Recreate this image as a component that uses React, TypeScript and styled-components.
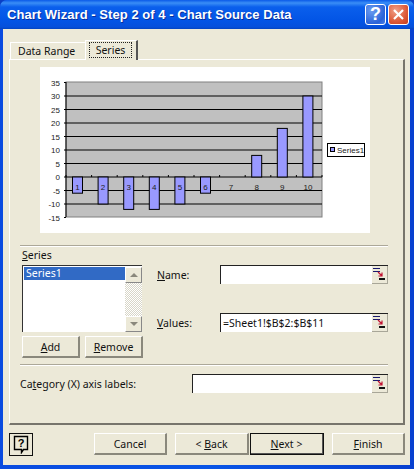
import { FC, ReactNode } from 'react';
import styled, { createGlobalStyle } from 'styled-components';

const values = [-6, -10, -12, -12, -10, -6, 0, 8, 18, 30];
const ticks = [35, 30, 25, 20, 15, 10, 5, 0, -5, -10, -15];
const zeroY = 177;
const unit = 2.7;

const Chart: FC = () => (
  <ChartSvg viewBox='40 67 330 166'>
    <rect x='66' y='82' width='256' height='135' fill='#c0c0c0' stroke='#808080' />
    {ticks.map((tick) => {
      const y = zeroY - tick * unit;
      return (
        <g key={tick}>
          {tick < 35 && tick > -15 && <line x1='64' x2='322' y1={y} y2={y} stroke='#000' />}
          {(tick === 35 || tick === -15) && <line x1='64' x2='66' y1={y} y2={y} stroke='#000' />}
          <ChartText x='60' y={y + 3} textAnchor='end'>
            {tick}
          </ChartText>
        </g>
      );
    })}
    <line x1='66' x2='66' y1='82' y2='217' stroke='#000' />
    {Array.from({ length: 11 }, (_, i) => (
      <line key={i} x1={66 + i * 25.6} x2={66 + i * 25.6} y1={zeroY - 2} y2={zeroY} stroke='#000' />
    ))}
    {values.map((value, i) => {
      const center = 77.5 + i * 25.6;
      return (
        <g key={i}>
          {value !== 0 && (
            <rect
              x={center - 5}
              y={value > 0 ? zeroY - value * unit : zeroY}
              width='10'
              height={Math.abs(value) * unit}
              fill='#9999ff'
              stroke='#000'
            />
          )}
          <ChartText x={center} y='190' textAnchor='middle'>
            {i + 1}
          </ChartText>
        </g>
      );
    })}
    <rect x='327.5' y='143.5' width='37' height='13' fill='#fff' stroke='#000' />
    <rect x='330.5' y='147.5' width='4' height='4' fill='#9999ff' stroke='#000' />
    <ChartText x='337' y='153'>
      Series1
    </ChartText>
  </ChartSvg>
);

const RefIcon: FC = () => (
  <RefButton>
    <svg width='15' height='15' viewBox='0 0 15 15'>
      <rect x='1' y='1' width='7' height='1' fill='#1a1a6e' />
      <rect x='1' y='4' width='7' height='1' fill='#1a1a6e' />
      <path d='M6 5l4 4M10 5.5v3.5H6.5' stroke='#c01030' strokeWidth='1.2' fill='none' />
      <rect x='7' y='11' width='6' height='2' fill='#101010' />
    </svg>
  </RefButton>
);

const Field: FC<{ value?: string; width: number }> = ({ value, width }) => (
  <FieldBox $width={width}>
    <FieldText>{value}</FieldText>
    <RefIcon />
  </FieldBox>
);

const Label: FC<{ before?: string; mark: string; after: string }> = ({ before, mark, after }) => (
  <span>
    {before}
    <u>{mark}</u>
    {after}
  </span>
);

const Button: FC<{ children: ReactNode; width: number; primary?: boolean }> = ({ children, width, primary }) => (
  <Btn $width={width} $primary={primary}>
    {children}
  </Btn>
);

export default function App() {
  return (
    <>
      <GlobalStyle />
      <Window>
        <TitleBar>
          <TitleText>Chart Wizard - Step 2 of 4 - Chart Source Data</TitleText>
          <HelpCaption>?</HelpCaption>
          <CloseCaption>
            <svg width='13' height='13' viewBox='0 0 13 13'>
              <path d='M2 2l9 9M11 2l-9 9' stroke='#fff' strokeWidth='2.2' />
            </svg>
          </CloseCaption>
        </TitleBar>
        <Client>
          <TabStrip>
            <Tab>Data Range</Tab>
            <ActiveTab>
              <Focus>Series</Focus>
            </ActiveTab>
          </TabStrip>
          <Panel>
            <ChartFrame>
              <Chart />
            </ChartFrame>
            <Divider $gap={12} />
            <SeriesSection>
              <SeriesTitle>
                <Label mark='S' after='eries' />
              </SeriesTitle>
              <SeriesBody>
                <SeriesLeft>
                  <ListBox>
                    <ListItems>
                      <SelectedItem>Series1</SelectedItem>
                    </ListItems>
                    <ScrollBar>
                      <ScrollButton>
                        <Arrow $up />
                      </ScrollButton>
                      <ScrollTrack />
                      <ScrollButton>
                        <Arrow />
                      </ScrollButton>
                    </ScrollBar>
                  </ListBox>
                  <ListActions>
                    <SmallButton>
                      <Label mark='A' after='dd' />
                    </SmallButton>
                    <SmallButton>
                      <Label mark='R' after='emove' />
                    </SmallButton>
                  </ListActions>
                </SeriesLeft>
                <SeriesRight>
                  <FieldRow>
                    <FieldLabel>
                      <Label mark='N' after='ame:' />
                    </FieldLabel>
                    <Field width={168} />
                  </FieldRow>
                  <FieldRow>
                    <FieldLabel>
                      <Label mark='V' after='alues:' />
                    </FieldLabel>
                    <Field width={168} value='=Sheet1!$B$2:$B$11' />
                  </FieldRow>
                </SeriesRight>
              </SeriesBody>
            </SeriesSection>
            <Divider $gap={6} />
            <CategoryRow>
              <span>
                <Label before='Ca' mark='t' after='egory (X) axis labels:' />
              </span>
              <Field width={196} />
            </CategoryRow>
          </Panel>
          <Footer>
            <HelpButton>
              <svg width='17' height='19' viewBox='0 0 17 19'>
                <path
                  d='M1.5 1.5h13v13h-4l-2 3v-3h-7z'
                  fill='#ece9d8'
                  stroke='#000'
                  strokeWidth='1.4'
                />
                <text x='8' y='12' textAnchor='middle' fontSize='11' fontWeight='700' fontFamily='Liberation Sans, sans-serif'>
                  ?
                </text>
              </svg>
            </HelpButton>
            <FooterButtons>
              <Button width={73}>Cancel</Button>
              <BackNext>
                <Button width={74}>
                  <Label before='< ' mark='B' after='ack' />
                </Button>
                <Button width={74} primary>
                  <Label mark='N' after='ext >' />
                </Button>
              </BackNext>
              <Button width={73}>
                <Label mark='F' after='inish' />
              </Button>
            </FooterButtons>
          </Footer>
        </Client>
      </Window>
    </>
  );
}

const GlobalStyle = createGlobalStyle`
  * {
    box-sizing: border-box;
  }
  html, body {
    margin: 0;
    background: #0a3fc4;
  }
  u {
    text-underline-offset: 1px;
  }
`;

const Window = styled.div`
  width: 414px;
  height: 469px;
  display: flex;
  flex-direction: column;
  overflow: hidden;
  border-radius: 7px 7px 0 0;
  background: linear-gradient(90deg, #0a4be0 0, #0a55e6 50%, #0840d0 100%);
  font-family: 'Noto Sans', 'Liberation Sans', sans-serif;
  font-size: 10.5px;
  color: #111;
`;

const TitleBar = styled.div`
  height: 29px;
  flex: none;
  display: flex;
  align-items: center;
  padding: 0 5px 1px 7px;
  background: linear-gradient(180deg, #0a5ae8 0, #3a8ef6 3px, #0a5fec 7px, #0355e6 20px, #0650dc 27px, #0444c0 29px);
`;

const TitleText = styled.div`
  flex: 1;
  color: #fff;
  font-family: 'Liberation Sans', sans-serif;
  font-size: 13px;
  font-weight: 700;
  letter-spacing: 0.05px;
  white-space: nowrap;
  text-shadow: 1px 1px 0 #0a2f9c;
`;

const CaptionButton = styled.div`
  width: 21px;
  height: 21px;
  display: flex;
  align-items: center;
  justify-content: center;
  border: 1px solid #fff;
  border-radius: 3px;
`;

const HelpCaption = styled(CaptionButton)`
  margin-right: 2px;
  background: radial-gradient(circle at 30% 30%, #6b9cf0, #2a62d8 70%, #4a80e8);
  color: #fff;
  font-family: 'Liberation Sans', sans-serif;
  font-size: 18px;
  font-weight: 700;
`;

const CloseCaption = styled(CaptionButton)`
  background: radial-gradient(circle at 35% 30%, #f0a088, #dd5a38 60%, #c43c1c);
`;

const Client = styled.div`
  flex: 1;
  display: flex;
  flex-direction: column;
  margin: 0 4px 4px 3px;
  padding: 11px 5px 0 6px;
  background: #ece9d8;
`;

const TabStrip = styled.div`
  height: 19px;
  flex: none;
  display: flex;
  align-items: flex-end;
  padding-left: 1px;
  position: relative;
  z-index: 1;
`;

const Tab = styled.div`
  width: 75px;
  height: 17px;
  padding-left: 7px;
  line-height: 17px;
  background: #ece9d8;
  border-top: 1px solid #fff;
  border-left: 1px solid #fff;
  white-space: nowrap;
`;

const ActiveTab = styled.div`
  width: 53px;
  height: 20px;
  margin-bottom: -1px;
  padding: 1px 4px 2px 3px;
  background: #ece9d8;
  border-top: 1px solid #fff;
  border-left: 1px solid #fff;
  border-right: 2px solid #555;
`;

const Focus = styled.div`
  height: 16px;
  line-height: 14px;
  text-align: center;
  border: 1px dotted #222;
`;

const Panel = styled.div`
  height: 366px;
  flex: none;
  display: flex;
  flex-direction: column;
  padding: 7px 15px 0 10px;
  border-top: 1px solid #fff;
  border-left: 1px solid #fff;
  border-right: 2px solid #77756c;
  border-bottom: 2px solid #77756c;
`;

const ChartFrame = styled.div`
  width: 330px;
  height: 166px;
  flex: none;
  margin-left: 20px;
  background: #fff;
`;

const ChartSvg = styled.svg`
  display: block;
  width: 330px;
  height: 166px;
`;

const ChartText = styled.text`
  font-family: 'Liberation Sans', sans-serif;
  font-size: 8px;
  fill: #222;
`;

const Divider = styled.div<{ $gap: number }>`
  height: 2px;
  flex: none;
  margin-top: ${({ $gap }) => $gap}px;
  background: #aca899;
  border-bottom: 1px solid #fff;
`;

const SeriesSection = styled.div`
  flex: none;
  display: flex;
  flex-direction: column;
  padding-left: 2px;
`;

const SeriesTitle = styled.div`
  height: 18px;
  flex: none;
  padding-top: 1px;
  line-height: 15px;
`;

const SeriesBody = styled.div`
  display: flex;
`;

const SeriesLeft = styled.div`
  width: 122px;
  flex: none;
  display: flex;
  flex-direction: column;
  gap: 4px;
`;

const ListBox = styled.div`
  width: 120px;
  height: 67px;
  display: flex;
  padding: 1px 0 0 1px;
  background: #fff;
  border-top: 1px solid #333;
  border-left: 1px solid #333;
`;

const ListItems = styled.div`
  flex: 1;
  background: #fff;
`;

const SelectedItem = styled.div`
  height: 13px;
  padding-left: 2px;
  line-height: 13px;
  color: #fff;
  background: #316ac5;
`;

const ScrollBar = styled.div`
  width: 17px;
  display: flex;
  flex-direction: column;
`;

const ScrollButton = styled.div`
  height: 16px;
  flex: none;
  display: flex;
  align-items: center;
  justify-content: center;
  background: #ece9d8;
  border-top: 1px solid #fff;
  border-left: 1px solid #fff;
  border-right: 1px solid #888;
  border-bottom: 1px solid #888;
`;

const ScrollTrack = styled.div`
  flex: 1;
  background: repeating-conic-gradient(#d8d6c8 0 25%, #fff 0 50%) 0 0 / 2px 2px;
`;

const Arrow = styled.div<{ $up?: boolean }>`
  width: 0;
  height: 0;
  border-left: 4px solid transparent;
  border-right: 4px solid transparent;
  ${({ $up }) => ($up ? 'border-bottom: 4px solid #8a887c;' : 'border-top: 4px solid #8a887c;')}
`;

const ListActions = styled.div`
  display: flex;
  gap: 5px;
`;

const Btn = styled.div<{ $width: number; $primary?: boolean }>`
  width: ${({ $width }) => $width}px;
  height: 22px;
  display: flex;
  align-items: center;
  justify-content: center;
  white-space: nowrap;
  background: #ece9d8;
  border-top: 1px solid #fff;
  border-left: 1px solid #fff;
  border-right: 2px solid #8a887c;
  border-bottom: 2px solid #8a887c;
  ${({ $primary }) =>
    $primary &&
    `
    outline: 1px solid #111;
    outline-offset: -1px;
    border-color: #111 #555 #555 #111;
  `}
`;

const SmallButton = styled(Btn).attrs({ $width: 58 })``;

const SeriesRight = styled.div`
  flex: 1;
  display: flex;
  flex-direction: column;
  gap: 29px;
  padding-left: 13px;
`;

const FieldRow = styled.div`
  display: flex;
  align-items: center;
  justify-content: space-between;
`;

const FieldLabel = styled.div`
  width: 63px;
`;

const FieldBox = styled.div<{ $width: number }>`
  width: ${({ $width }) => $width}px;
  height: 19px;
  flex: none;
  display: flex;
  align-items: center;
  background: #fff;
  border-top: 1px solid #222;
  border-left: 1px solid #222;
`;

const FieldText = styled.div`
  flex: 1;
  padding-left: 2px;
  white-space: nowrap;
`;

const RefButton = styled.div`
  width: 16px;
  height: 18px;
  flex: none;
  display: flex;
  align-items: center;
  justify-content: center;
  background: #ece9d8;
  border-right: 1px solid #a8a698;
  border-bottom: 1px solid #a8a698;
`;

const CategoryRow = styled.div`
  display: flex;
  align-items: center;
  justify-content: space-between;
  margin-top: 8px;
`;

const Footer = styled.div`
  display: flex;
  align-items: flex-start;
  justify-content: space-between;
  padding-top: 8px;
`;

const HelpButton = styled.div`
  width: 24px;
  height: 23px;
  display: flex;
  align-items: center;
  justify-content: center;
  background: #ece9d8;
  border: 1px solid #111;
`;

const FooterButtons = styled.div`
  display: flex;
  gap: 8px;
`;

const BackNext = styled.div`
  display: flex;
  gap: 1px;
`;
